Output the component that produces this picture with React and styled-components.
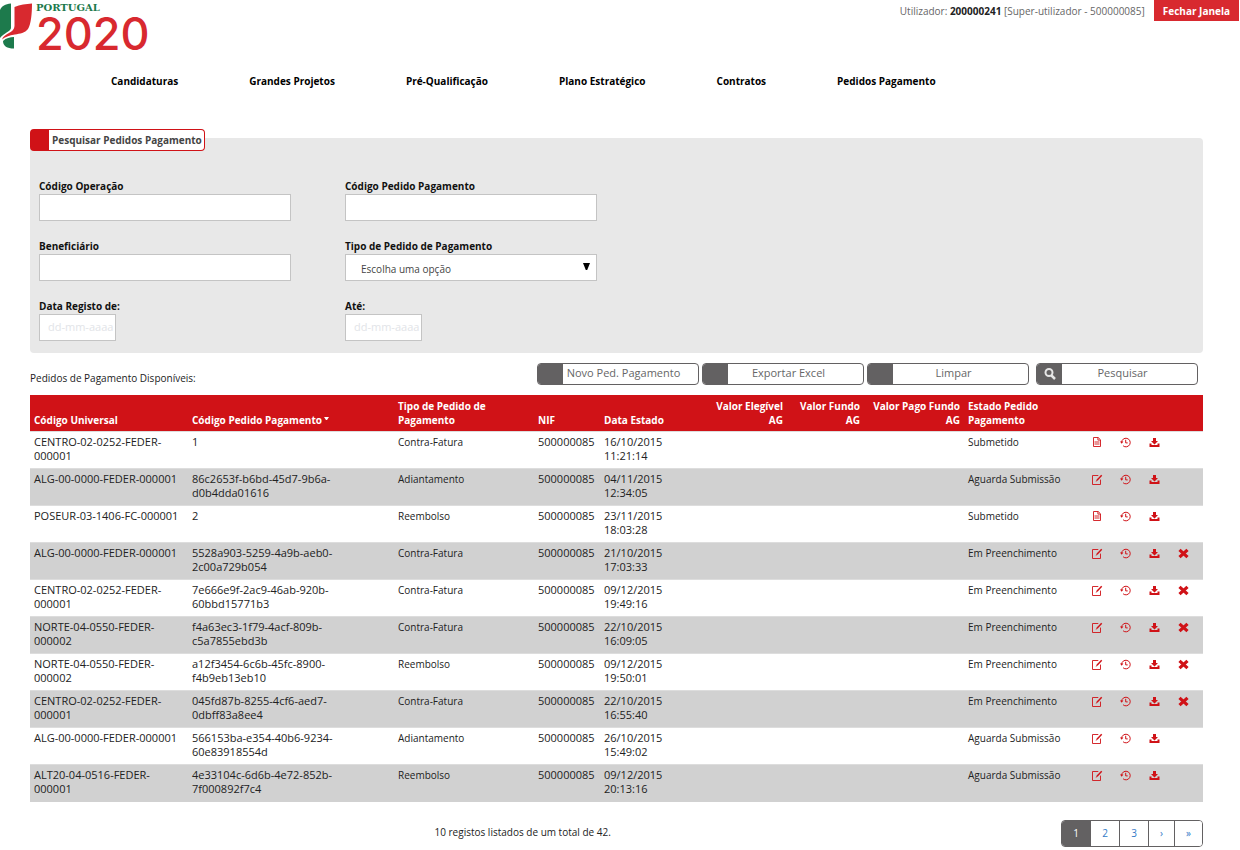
import React from "react";
import styled, { createGlobalStyle, css } from "styled-components";

const RED = "#d01217";
const BRAND = "#d8292f";
const DARK = "#636162";

const GlobalStyle = createGlobalStyle`
  *, *::before, *::after { box-sizing: border-box; }
  body {
    margin: 0;
    background: #fff;
    color: #222;
    font-family: "Open Sans", "Noto Sans", sans-serif;
    font-size: 10px;
    line-height: 14px;
  }
  button, input, select { font: inherit; color: inherit; }
`;

const Page = styled.div`
  min-width: 1100px;
`;

const Header = styled.header`
  display: flex;
  justify-content: space-between;
  align-items: flex-start;
  height: 52px;
`;

const Logo = styled.a`
  display: flex;
  gap: 4px;
  text-decoration: none;
  svg { display: block; flex: none; }
`;

const LogoText = styled.span`
  display: flex;
  flex-direction: column;
`;

const LogoName = styled.span`
  color: #1d7a4c;
  font-family: "DejaVu Serif", serif;
  font-weight: 700;
  font-size: 10px;
  line-height: 15px;
`;

const LogoYear = styled.span`
  color: ${BRAND};
  font-family: Inter, sans-serif;
  font-weight: 500;
  font-size: 45px;
  line-height: 37px;
`;

const UserBar = styled.div`
  display: flex;
  align-items: center;
  gap: 9px;
  margin-right: 1px;
  color: #666;
  strong { color: #222; }
`;

const CloseButton = styled.button`
  height: 21px;
  padding: 0 9px;
  border: 0;
  background: ${BRAND};
  color: #fff;
  font-weight: 700;
  cursor: pointer;
`;

const Nav = styled.nav`
  display: flex;
  gap: 71px;
  margin: 22px 0 0 111px;
  a {
    color: #000;
    font-weight: 700;
    text-decoration: none;
    white-space: nowrap;
  }
`;

const Main = styled.main`
  padding: 50px 37px 4px 30px;
`;

const Panel = styled.form`
  background: #e8e8e8;
  border-radius: 0 4px 4px 4px;
  padding-bottom: 12px;
`;

const PanelTitle = styled.h2`
  position: relative;
  top: -9px;
  display: inline-block;
  margin: 0;
  padding: 0 2px 0 3px;
  height: 22px;
  border: 1px solid ${RED};
  border-left-width: 19px;
  border-radius: 4px;
  background: #fff;
  color: #444;
  font-size: 10px;
  line-height: 21px;
`;

const Fields = styled.div`
  display: grid;
  grid-template-columns: 252px 252px;
  gap: 18px 54px;
  margin: 19px 9px 0;
`;

const Field = styled.div`
  display: flex;
  flex-direction: column;
  align-items: flex-start;
  gap: 1px;
  label { color: #111; font-weight: 700; }
`;

const control = css`
  display: block;
  height: 27px;
  margin: 0;
  border: 1px solid #c4c4c4;
  border-radius: 0;
  background: #fff;
`;

const TextInput = styled.input`
  ${control}
  width: ${(p) => (p.$short ? "77px" : "100%")};
  padding: 0 0 2px 8px;
  font-size: ${(p) => (p.$short ? "11px" : "10px")};
  &::placeholder { color: #e2e4e8; opacity: 1; }
`;

const SelectBox = styled.div`
  position: relative;
  width: 100%;
  select {
    ${control}
    width: 100%;
    padding: 2px 15px 0;
    appearance: none;
    color: #444;
  }
  svg {
    position: absolute;
    right: 7px;
    top: 9px;
    pointer-events: none;
  }
`;

const Toolbar = styled.div`
  display: flex;
  justify-content: space-between;
  align-items: flex-start;
  padding: 10px 5px 10px 0;
  p { margin: 8px 0 0; }
`;

const Actions = styled.div`
  display: flex;
  gap: 3px;
`;

const ActionButton = styled.button`
  display: flex;
  width: 162px;
  height: 22px;
  padding: 0;
  margin-left: ${(p) => (p.$apart ? "4px" : 0)};
  border: 1px solid ${DARK};
  border-radius: 4px;
  background: #fff;
  color: #666;
  font-size: 11px;
  line-height: 18px;
  overflow: hidden;
  cursor: pointer;
`;

const ActionIcon = styled.span`
  display: flex;
  align-items: center;
  justify-content: center;
  width: 25px;
  height: 20px;
  background: ${DARK};
`;

const ActionLabel = styled.span`
  flex: 1;
  padding-right: 14px;
  text-align: center;
  white-space: nowrap;
`;

const Table = styled.table`
  width: 100%;
  table-layout: fixed;
  border-collapse: collapse;
  white-space: pre;
  thead { background: ${RED}; color: #fff; }
  th {
    padding: 4px;
    vertical-align: bottom;
    font-weight: 700;
  }
  th svg { margin-left: 2px; vertical-align: 3px; }
  tbody td {
    height: 37px;
    padding: 3px 4px 5px;
    border-top: 1px solid #ddd;
    vertical-align: top;
  }
  tbody tr:nth-child(even) { background: #d1d1d1; }
`;

const HeadCell = styled.th`
  text-align: ${(p) => (p.$right ? "right" : "left")};
`;

const CodeCell = styled.td`
  font-size: 11px;
`;

const IconButton = styled.button`
  display: flex;
  align-items: center;
  width: 11px;
  height: 14px;
  padding: 0;
  border: 0;
  background: none;
  color: ${RED};
  cursor: pointer;
  svg { display: block; flex: none; }
`;

const Footer = styled.footer`
  display: grid;
  grid-template-columns: 21fr 4fr;
  padding-top: 18px;
  p { margin: 5px 0 0; text-align: center; }
`;

const Pager = styled.nav`
  justify-self: end;
  display: flex;
  border: 1px solid ${DARK};
  border-radius: 4px;
  overflow: hidden;
`;

const PageLink = styled.a`
  width: ${(p) => (p.$narrow ? "26px" : "29px")};
  height: 25px;
  border-right: 1px solid ${DARK};
  background: ${(p) => (p.$active ? DARK : "#fff")};
  color: ${(p) => (p.$active ? "#fff" : "#337ac7")};
  line-height: 24px;
  text-align: center;
  text-decoration: none;
  &:last-child { width: 27px; border-right: 0; }
`;

const icons = {
  view: (
    <svg width="10" height="10" viewBox="0 0 10 10" fill="none" stroke="currentColor" strokeWidth="0.9">
      <path d="M1.5.5h4.700l2.300 2.300v6.700h-7z" />
      <path d="M5.900.7v2.400h2.400M2.500 5h5M2.500 7h5" />
    </svg>
  ),
  edit: (
    <svg width="11" height="11" viewBox="0 0 11 11" fill="none" stroke="currentColor" strokeWidth="0.9">
      <path d="M6.300 1.500H.5v9h8V5.600" />
      <path d="M9.700 1.200 5 6.200" strokeWidth="1.500" />
      <path d="M5.200 5.800 4.200 7.500" />
    </svg>
  ),
  history: (
    <svg width="11" height="11" viewBox="0 0 11 11" fill="none" stroke="currentColor">
      <path d="M1.600 5.500a4.300 4.300 0 1 1 1.500 3.300" />
      <path d="M5.700 2.800v3.100h2" />
      <path d="M0 4.600h3.400L1.700 6.800z" fill="currentColor" stroke="none" />
    </svg>
  ),
  download: (
    <svg width="11" height="11" viewBox="0 0 11 11" fill="currentColor">
      <path d="M4 1h3v3h2L5.500 7.500 2 4h2z" />
      <path d="M.5 6.500h2v1.500h6V6.500h2V10H.5z" />
    </svg>
  ),
  remove: (
    <svg width="11" height="11" viewBox="0 0 11 11" fill="none" stroke="currentColor" strokeWidth="3.200">
      <path d="M1.500 1.800l8 7.400M9.500 1.800l-8 7.400" />
    </svg>
  ),
};

const actionNames = { view: "Consultar", edit: "Editar", history: "Histórico", download: "Descarregar", remove: "Eliminar" };

const columns = [
  { label: "Código Universal", width: 158 },
  { label: "Código Pedido Pagamento", width: 206, sorted: true },
  { label: "Tipo de Pedido de\nPagamento", width: 140 },
  { label: "NIF", width: 66 },
  { label: "Data Estado", width: 96 },
  { label: "Valor Elegível\nAG", width: 91, right: true },
  { label: "Valor Fundo\nAG", width: 77, right: true },
  { label: "Valor Pago Fundo\nAG", width: 100, right: true },
  { label: "Estado Pedido\nPagamento", width: 124 },
];

const iconColumns = [28, 29, 29, 29];

const rows = [
  ["CENTRO-02-0252-FEDER-\n000001", "1", "Contra-Fatura", "16/10/2015\n11:21:14", "Submetido"],
  ["ALG-00-0000-FEDER-000001", "86c2653f-b6bd-45d7-9b6a-\nd0b4dda01616", "Adiantamento", "04/11/2015\n12:34:05", "Aguarda Submissão"],
  ["POSEUR-03-1406-FC-000001", "2", "Reembolso", "23/11/2015\n18:03:28", "Submetido"],
  ["ALG-00-0000-FEDER-000001", "5528a903-5259-4a9b-aeb0-\n2c00a729b054", "Contra-Fatura", "21/10/2015\n17:03:33", "Em Preenchimento"],
  ["CENTRO-02-0252-FEDER-\n000001", "7e666e9f-2ac9-46ab-920b-\n60bbd15771b3", "Contra-Fatura", "09/12/2015\n19:49:16", "Em Preenchimento"],
  ["NORTE-04-0550-FEDER-\n000002", "f4a63ec3-1f79-4acf-809b-\nc5a7855ebd3b", "Contra-Fatura", "22/10/2015\n16:09:05", "Em Preenchimento"],
  ["NORTE-04-0550-FEDER-\n000002", "a12f3454-6c6b-45fc-8900-\nf4b9eb13eb10", "Reembolso", "09/12/2015\n19:50:01", "Em Preenchimento"],
  ["CENTRO-02-0252-FEDER-\n000001", "045fd87b-8255-4cf6-aed7-\n0dbff83a8ee4", "Contra-Fatura", "22/10/2015\n16:55:40", "Em Preenchimento"],
  ["ALG-00-0000-FEDER-000001", "566153ba-e354-40b6-9234-\n60e83918554d", "Adiantamento", "26/10/2015\n15:49:02", "Aguarda Submissão"],
  ["ALT20-04-0516-FEDER-\n000001", "4e33104c-6d6b-4e72-852b-\n7f000892f7c4", "Reembolso", "09/12/2015\n20:13:16", "Aguarda Submissão"],
];

const navItems = ["Candidaturas", "Grandes Projetos", "Pré-Qualificação", "Plano Estratégico", "Contratos", "Pedidos Pagamento"];

function LogoMark() {
  return (
    <svg width="32" height="49" viewBox="0 0 32 49" aria-hidden="true">
      <path d="M0 10C2 6 5 4 11 3.500V28C11 31 4 33 0 38z" fill="#1d7a4c" />
      <path d="M14.500 7C20 4.500 26 4 32 3.500C32 14 31 24 28 29C25 33 20 33.500 15 34.500C9 35.500 5 37 2 39.500C4 33 14.500 33 14.500 26z" fill={BRAND} />
      <path d="M3 41C6 38 10 37 14 37V48.500C7 48.500 3 46 3 41z" fill="#1d7a4c" />
    </svg>
  );
}

function SearchPanel() {
  return (
    <Panel onSubmit={(e) => e.preventDefault()} id="search">
      <PanelTitle>Pesquisar Pedidos Pagamento</PanelTitle>
      <Fields>
        <Field><label htmlFor="op">Código Operação</label><TextInput id="op" /></Field>
        <Field><label htmlFor="pp">Código Pedido Pagamento</label><TextInput id="pp" /></Field>
        <Field><label htmlFor="ben">Beneficiário</label><TextInput id="ben" /></Field>
        <Field>
          <label htmlFor="tipo">Tipo de Pedido de Pagamento</label>
          <SelectBox>
            <select id="tipo"><option>Escolha uma opção</option></select>
            <svg width="7" height="7" viewBox="0 0 7 7"><path d="M0 0h7L4.200 7H2.800z" /></svg>
          </SelectBox>
        </Field>
        <Field><label htmlFor="de">Data Registo de:</label><TextInput id="de" $short placeholder="dd-mm-aaaa" /></Field>
        <Field><label htmlFor="ate">Até:</label><TextInput id="ate" $short placeholder="dd-mm-aaaa" /></Field>
      </Fields>
    </Panel>
  );
}

function Action({ children, icon, ...rest }) {
  return (
    <ActionButton type="button" {...rest}>
      <ActionIcon>{icon}</ActionIcon>
      <ActionLabel>{children}</ActionLabel>
    </ActionButton>
  );
}

const searchIcon = (
  <svg width="12" height="12" viewBox="0 0 12 12" fill="none" stroke="#e6e6e6" strokeWidth="2">
    <circle cx="5" cy="4.500" r="3.500" />
    <path d="M7.500 7.500 11 11" strokeWidth="2.500" />
  </svg>
);

export default function App() {
  return (
    <Page>
      <GlobalStyle />
      <Header>
        <Logo href="#" aria-label="Portugal 2020">
          <LogoMark />
          <LogoText><LogoName>PORTUGAL</LogoName><LogoYear>2020</LogoYear></LogoText>
        </Logo>
        <UserBar>
          <span>Utilizador: <strong>200000241</strong> [Super-utilizador - 500000085]</span>
          <CloseButton type="button">Fechar Janela</CloseButton>
        </UserBar>
      </Header>
      <Nav>{navItems.map((n) => <a href="#" key={n}>{n}</a>)}</Nav>
      <Main>
        <SearchPanel />
        <Toolbar>
          <p>Pedidos de Pagamento Disponíveis:</p>
          <Actions>
            <Action>Novo Ped. Pagamento</Action>
            <Action>Exportar Excel</Action>
            <Action>Limpar</Action>
            <Action $apart icon={searchIcon}>Pesquisar</Action>
          </Actions>
        </Toolbar>
        <Table>
          <colgroup>
            {columns.map((c) => <col key={c.label} width={c.width} />)}
            {iconColumns.map((w, i) => <col key={i} width={w} />)}
          </colgroup>
          <thead>
            <tr>
              {columns.map((c) => (
                <HeadCell key={c.label} scope="col" $right={c.right}>
                  {c.label}
                  {c.sorted && <svg width="6" height="4" viewBox="0 0 6 4" fill="#fff"><path d="M0 0h5L3 3H2z" /></svg>}
                </HeadCell>
              ))}
              <td colSpan={4} />
            </tr>
          </thead>
          <tbody>
            {rows.map(([code, order, type, date, state], i) => {
              const actions = [state === "Submetido" ? "view" : "edit", "history", "download"];
              if (state === "Em Preenchimento") actions.push("remove");
              return (
                <tr key={i}>
                  <CodeCell>{code}</CodeCell>
                  <CodeCell>{order}</CodeCell>
                  <td>{type}</td>
                  <CodeCell>500000085</CodeCell>
                  <CodeCell>{date}</CodeCell>
                  <td /><td /><td />
                  <td>{state}</td>
                  {iconColumns.map((_, n) => (
                    <td key={n}>
                      {actions[n] && (
                        <IconButton type="button" aria-label={actionNames[actions[n]]}>{icons[actions[n]]}</IconButton>
                      )}
                    </td>
                  ))}
                </tr>
              );
            })}
          </tbody>
        </Table>
        <Footer>
          <p>10 registos listados de um total de 42.</p>
          <Pager aria-label="Paginação">
            <PageLink href="#" $active>1</PageLink>
            <PageLink href="#">2</PageLink>
            <PageLink href="#">3</PageLink>
            <PageLink href="#" $narrow>›</PageLink>
            <PageLink href="#">»</PageLink>
          </Pager>
        </Footer>
      </Main>
    </Page>
  );
}
